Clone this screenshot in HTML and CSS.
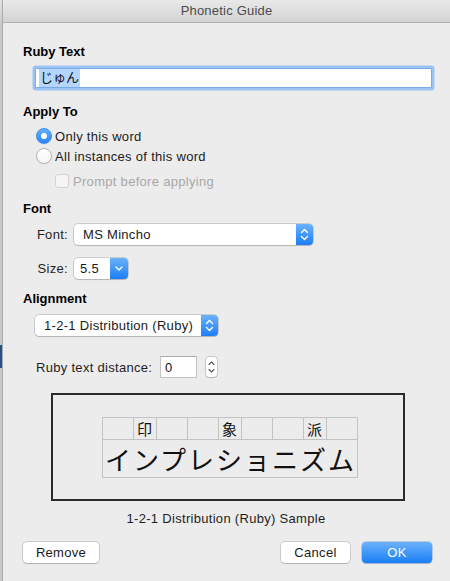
FILE: index.html
```html
<!DOCTYPE html>
<html lang="en">
<head>
  <meta charset="UTF-8" />
  <title>Phonetic Guide</title>
  <link rel="stylesheet" href="styles.css">
</head>
<body>
  <div class="screen">
    <div class="behind"></div>

    <div class="window">
      <div class="titlebar">Phonetic Guide</div>

      <div class="content">
        <h2 class="group-title ruby-title">Ruby Text</h2>
        <div class="text-field"><span class="selected">じゅん</span></div>

        <h2 class="group-title apply-title">Apply To</h2>
        <div class="radio-row first">
          <span class="radio checked"></span>
          <span>Only this word</span>
        </div>
        <div class="radio-row">
          <span class="radio"></span>
          <span>All instances of this word</span>
        </div>
        <div class="check-row">
          <span class="checkbox"></span>
          <span>Prompt before applying</span>
        </div>

        <h2 class="group-title font-title">Font</h2>
        <div class="field-row font-row">
          <span class="field-label">Font:</span>
          <div class="popup font-popup">
            <span class="popup-text">MS Mincho</span>
            <span class="popup-arrow">
              <svg width="17" height="21" viewBox="0 0 17 21"><path d="M5.5 8.5 L8.5 5.6 L11.5 8.5 M5.5 12.5 L8.5 15.4 L11.5 12.5" fill="none" stroke="#fff" stroke-width="1.4" stroke-linecap="round" stroke-linejoin="round"/></svg>
            </span>
          </div>
        </div>
        <div class="field-row size-row">
          <span class="field-label">Size:</span>
          <div class="popup size-popup">
            <span class="popup-text">5.5</span>
            <span class="popup-arrow wide">
              <svg width="18" height="21" viewBox="0 0 18 21"><path d="M6 9 L9 12 L12 9" fill="none" stroke="#fff" stroke-width="1.4" stroke-linecap="round" stroke-linejoin="round"/></svg>
            </span>
          </div>
        </div>

        <h2 class="group-title align-title">Alignment</h2>
        <div class="popup align-popup">
          <span class="popup-text">1-2-1 Distribution (Ruby)</span>
          <span class="popup-arrow">
            <svg width="17" height="21" viewBox="0 0 17 21"><path d="M5.5 8.5 L8.5 5.6 L11.5 8.5 M5.5 12.5 L8.5 15.4 L11.5 12.5" fill="none" stroke="#fff" stroke-width="1.4" stroke-linecap="round" stroke-linejoin="round"/></svg>
          </span>
        </div>

        <div class="distance-row">
          <span class="distance-label">Ruby text distance:</span>
          <div class="number-field">0</div>
          <div class="stepper">
            <svg width="11" height="20" viewBox="0 0 11 20"><path d="M3 7.5 L5.5 5 L8 7.5 M3 12.5 L5.5 15 L8 12.5" fill="none" stroke="#555" stroke-width="1.1" stroke-linecap="round" stroke-linejoin="round"/></svg>
          </div>
        </div>

        <div class="sample-box">
          <table class="sample">
            <tr class="kanji-row">
              <td class="pad"></td><td class="kanji">印</td><td class="pad"></td>
              <td class="pad"></td><td class="kanji">象</td><td class="pad"></td>
              <td class="pad"></td><td class="kanji">派</td><td class="pad"></td>
            </tr>
            <tr class="kana-row">
              <td colspan="9">インプレショニズム</td>
            </tr>
          </table>
        </div>
        <p class="caption">1-2-1 Distribution (Ruby) Sample</p>

        <div class="buttons">
          <button class="btn remove-btn">Remove</button>
          <div class="spacer"></div>
          <button class="btn cancel-btn">Cancel</button>
          <button class="btn ok-btn">OK</button>
        </div>
      </div>
    </div>
  </div>
</body>
</html>
```

FILE: styles.css
```css
body {
  margin: 0;
  font-family: "Liberation Sans", Arial, "Noto Sans CJK JP", sans-serif;
  font-size: 13px;
  letter-spacing: 0.3px;
  color: #1e1e1e;
  background-color: #ececec;
}

.screen {
  display: flex;
  height: 581px;
  overflow: hidden;
}

/* bit of the window behind the sheet */
.behind {
  width: 2px;
  flex-shrink: 0;
  background: linear-gradient(to bottom, #e2e2e2 0, #cdcdcd 22px, #c9c9c9 22px, #c9c9c9 345px, #24518a 345px, #24518a 368px, #c9c9c9 368px);
}

.window {
  flex: 1;
  border-left: 1px solid #ababab;
  background-color: #ececec;
}

.titlebar {
  height: 22px;
  line-height: 22px;
  text-align: center;
  color: #4b4b4b;
  font-size: 13px;
  letter-spacing: 0.2px;
  background: linear-gradient(to bottom, #e9e9e9, #d3d3d3);
  border-bottom: 1px solid #b1b1b1;
  border-top-left-radius: 5px;
}

.content {
  padding: 0 18px 0 20px;
}

.group-title {
  margin: 0;
  font-size: 13px;
  font-weight: bold;
  line-height: 16px;
  letter-spacing: 0;
  color: #000;
}

.ruby-title { margin-top: 21px; }
.apply-title { margin-top: 16px; }
.font-title { margin-top: 10px; }
.align-title { margin-top: 12px; }

.text-field {
  margin: 8px 0 0 12px;
  height: 20px;
  box-sizing: border-box;
  border: 1px solid #78abe8;
  box-shadow: 0 0 0 2.5px #9cc4f3;
  border-radius: 1px;
  background-color: #fff;
  padding-left: 3px;
  line-height: 18px;
  font-family: "Liberation Sans", "Noto Sans CJK JP", sans-serif;
  letter-spacing: 0;
  color: #111;
}

.selected {
  background-color: #b4d6fd;
  display: inline-block;
  padding: 0 1px;
}

.radio-row,
.check-row {
  display: flex;
  align-items: center;
  height: 20px;
  color: #1b1b1b;
}

.radio-row.first { margin-top: 6px; }
.check-row { margin-top: 5px; color: #a8a8a8; }

.radio {
  width: 16px;
  height: 16px;
  box-sizing: border-box;
  margin: 0 3px 0 13px;
  border-radius: 50%;
  border: 1px solid #b4b4b4;
  background: linear-gradient(to bottom, #ffffff, #f6f6f6);
  box-shadow: 0 0.5px 1px rgba(0,0,0,0.08);
  display: flex;
  align-items: center;
  justify-content: center;
}

.radio.checked {
  border-color: #3a8cf0;
  background: linear-gradient(to bottom, #68aefa, #2a86f5);
}

.radio.checked::after {
  content: "";
  width: 6px;
  height: 6px;
  border-radius: 50%;
  background-color: #fff;
}

.checkbox {
  width: 14px;
  height: 14px;
  box-sizing: border-box;
  margin: 0 4px 0 32px;
  border: 1px solid #d3d3d3;
  border-radius: 3px;
  background-color: #f5f5f5;
}

.field-row {
  display: grid;
  grid-template-columns: 45px auto;
  column-gap: 6px;
  align-items: center;
  justify-content: start;
}

.font-row { margin-top: 7px; }
.size-row { margin-top: 13px; }

.field-label {
  text-align: right;
  color: #1e1e1e;
}

.popup {
  display: flex;
  height: 21px;
  box-sizing: border-box;
  background-color: #fff;
  border-radius: 4px;
  box-shadow: 0 0 0 0.5px rgba(0,0,0,0.28), 0 1px 1px rgba(0,0,0,0.12);
  line-height: 21px;
  color: #1a1a1a;
}

.popup-text {
  flex: 1;
  padding-left: 9px;
  white-space: nowrap;
}

.popup-arrow {
  width: 17px;
  display: flex;
  align-items: center;
  justify-content: center;
  background: linear-gradient(to bottom, #6bb2fb, #1c7ef5);
  border-radius: 0 4px 4px 0;
}

.popup-arrow.wide { width: 18px; }

.font-popup { width: 239px; }
.size-popup { width: 54px; }
.size-popup .popup-text { padding-left: 6px; }

.align-popup {
  width: 183px;
  margin: 8px 0 0 12px;
}

.distance-row {
  display: flex;
  align-items: center;
  margin-top: 20px;
  height: 22px;
}

.distance-label {
  width: 124px;
  margin-left: 13px;
}

.number-field {
  width: 37px;
  height: 22px;
  box-sizing: border-box;
  border: 1px solid #c3c3c3;
  border-top-color: #a9a9a9;
  background-color: #fff;
  padding-left: 4px;
  line-height: 21px;
  color: #111;
}

.stepper {
  width: 11px;
  height: 20px;
  margin-left: 9px;
  box-sizing: border-box;
  border-radius: 3px;
  background-color: #fff;
  box-shadow: 0 0 0 0.5px rgba(0,0,0,0.3), 0 1px 1px rgba(0,0,0,0.1);
  display: flex;
  align-items: center;
  justify-content: center;
}

.stepper svg {
  flex-shrink: 0;
}

.sample-box {
  margin: 15px 0 0 28px;
  width: 354px;
  height: 108px;
  box-sizing: border-box;
  border: 2px solid #2b2b2b;
  display: flex;
  align-items: center;
  justify-content: center;
  padding-left: 3px;
}

.sample {
  table-layout: fixed;
  border-collapse: collapse;
  font-family: "Noto Sans CJK JP", sans-serif;
  letter-spacing: 0;
  color: #111;
}

.sample td {
  border: 1px solid #c2c2c2;
  padding: 0;
  text-align: center;
  white-space: nowrap;
  overflow: hidden;
}

.kanji-row td {
  height: 21px;
  font-size: 15px;
  line-height: 21px;
}

.kanji-row .pad { width: 30px; }
.kanji-row .kanji { width: 22px; }

.kana-row td {
  height: 37px;
  font-size: 26px;
  line-height: 37px;
  letter-spacing: 2px;
  padding-left: 2px;
}

.caption {
  margin: 10px 0 0;
  padding-right: 3px;
  text-align: center;
  line-height: 16px;
  color: #1e1e1e;
}

.buttons {
  display: flex;
  align-items: center;
  margin-top: 15px;
  gap: 12px;
}

.spacer { flex: 1; }

.btn {
  height: 21px;
  padding: 0;
  font-family: "Liberation Sans", Arial, sans-serif;
  font-size: 13px;
  letter-spacing: 0.3px;
  color: #1a1a1a;
  background-color: #fff;
  border: none;
  border-radius: 4px;
  box-shadow: 0 0 0 0.5px rgba(0,0,0,0.28), 0 1px 1px rgba(0,0,0,0.12);
}

.remove-btn { width: 76px; }
.cancel-btn { width: 69px; }

.ok-btn {
  width: 70px;
  color: #fff;
  background: linear-gradient(to bottom, #6cb2fb, #1a7ef5);
  box-shadow: 0 0 0 0.5px rgba(20,100,220,0.5), 0 1px 1px rgba(0,0,0,0.12);
}
```
